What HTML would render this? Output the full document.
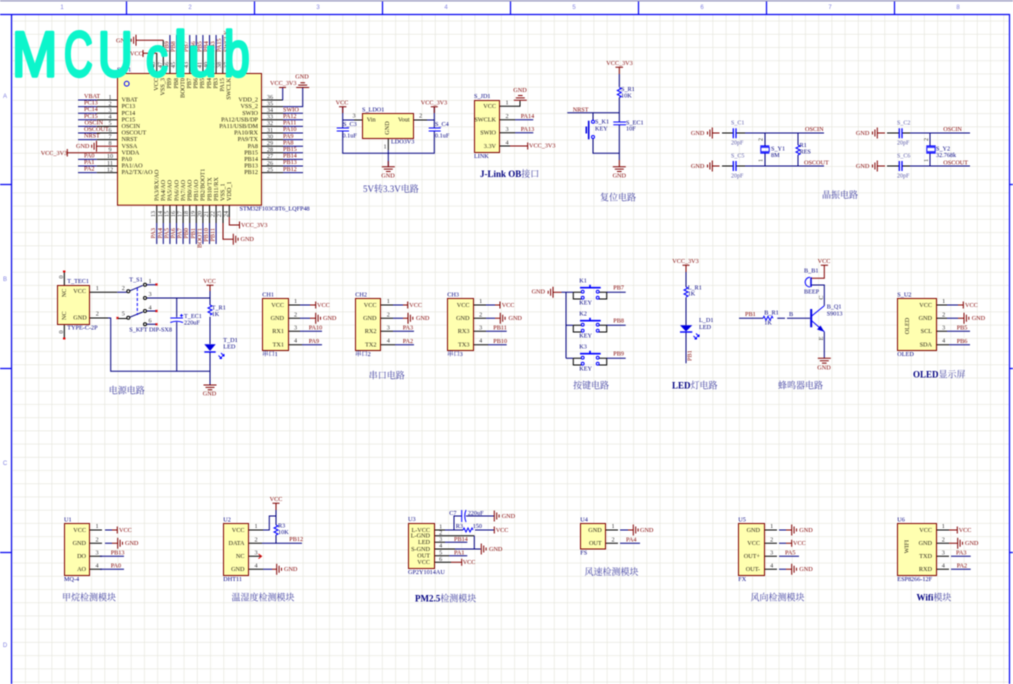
<!DOCTYPE html>
<html><head><meta charset="utf-8"><style>
html,body{margin:0;padding:0;background:#fff;width:1013px;height:684px;overflow:hidden}
svg{display:block;position:absolute;left:0;top:0}
text{font-family:"Liberation Serif","Noto Serif CJK SC",serif;font-size:6.2px}
.n{fill:#800000}.d{fill:#2a2418}.m{fill:#000080}.k{fill:#333}
.g{fill:#5b5ba8;font-size:6px}
.t{fill:#4040a0;font-size:9px}.t b,.t tspan{font-weight:bold;fill:#000080}
.c{text-anchor:middle}.e{text-anchor:end}
.f{fill:#8080e0;font-size:6px;text-anchor:middle;font-family:"Liberation Sans",sans-serif}
.p,.w,.r,.b,.fr{fill:none;stroke-width:1}
.p{stroke:#000}.w{stroke:#000080}.r{stroke:#800000}.b{stroke:#0000ff}.fr{stroke:#0000f0;stroke-width:1.2}
.box{fill:#ffffb0;stroke:#800000;stroke-width:1}
.mc text,.mc{font-family:"Liberation Sans",sans-serif;font-size:64px;fill:#0cf5cb;stroke:#0cf5cb;stroke-width:3.5px;stroke-linejoin:round}
</style></head><body>
<svg width="1013" height="684" viewBox="0 0 1013 684" style="filter:blur(.4px)">
<defs>
<pattern id="gr" x="11.9" y="20.7" width="13.22" height="13.22" patternUnits="userSpaceOnUse"><path d="M0 0V13.22M0 0H13.22" stroke="#e4e4da" stroke-width="1.2" fill="none"/></pattern>
<g id="gR" class="r"><path d="M0-5.5V5.5M2.4-3.5V3.5M4.8-1.5V1.5" class="r"/></g>
<g id="gL"><path d="M0-5.5V5.5M-2.4-3.5V3.5M-4.8-1.5V1.5" class="r"/></g>
<g id="gD"><path d="M-6.5 0H6.5M-4.5 2.4H4.5M-2.3 4.8H2.3" class="r"/></g>
<g id="gU"><path d="M-6.5 0H6.5M-4.5-2.4H4.5M-2.3-4.8H2.3" class="r"/></g>
<path id="rv" d="M0 0l2 1-4 2 4 2-4 2 4 2-2 1" class="b"/>
<path id="rh" d="M0 0l1-2 2 4 2-4 2 4 2-4 1 2" class="b"/>
<g id="key">
<path class="p" d="M573.3 292.3H581.7M573.3 292.3V299H581.7M598.7 292.3H606.7V299H598.7"/>
<circle cx="582.7" cy="291.7" r="1.4" class="b"/><circle cx="582.7" cy="297.7" r="1.4" class="b"/>
<circle cx="597.7" cy="291.7" r="1.4" class="b"/><circle cx="597.7" cy="297.7" r="1.4" class="b"/>
<path class="b" stroke-width="1.6" style="stroke-width:1.6" d="M580 287.7H600.7M590 287V284.7"/>
<path class="w" d="M606.7 292.3H625.7"/>
</g>
<path id="arw" d="M0 0l3 3M3 1v2h-2M-2.5 2.5l3 3M.5 3.5v2h-2" class="b"/>
</defs>
<rect x="12" y="15" width="997" height="669" fill="url(#gr)"/>
<!-- frame -->
<path d="M0 .8H1013" stroke="#9a9ac0" stroke-width="1.4"/>
<path class="fr" d="M11.5 14.5H1009.5V684M11.5 14.5V684M0 14.5H11.5M126.5 1.5V14.5M254.5 1.5V14.5M382.5 1.5V14.5M510.5 1.5V14.5M638.5 1.5V14.5M766.5 1.5V14.5M894.5 1.5V14.5M0 184.5H11.5M0 368.5H11.5M0 552.5H11.5M1009.5 184.5H1013M1009.5 368.5H1013M1009.5 552.5H1013"/>
<text class="f" x="62" y="9">1</text><text class="f" x="190" y="9">2</text><text class="f" x="318" y="9">3</text><text class="f" x="446" y="9">4</text><text class="f" x="574" y="9">5</text><text class="f" x="702" y="9">6</text><text class="f" x="830" y="9">7</text><text class="f" x="958" y="9">8</text>
<text class="f" x="5" y="98">A</text><text class="f" x="5" y="281">B</text><text class="f" x="5" y="465">C</text><text class="f" x="5" y="647">D</text>

<!-- MCU -->
<path class="p" d="M117 100H96.7M117 106.6H96.7M117 113.2H96.7M117 119.8H96.7M117 126.4H96.7M117 133H96.7M117 139.6H96.7M117 159.4H96.7M117 166H96.7M117 172.6H96.7M262 100H283M262 106.6H283M262 113.2H283M262 119.8H283M262 126.4H283M262 133H283M262 139.6H283M262 146.2H283M262 152.8H283M262 159.4H283M262 166H283M262 172.6H283"/>
<path class="w" d="M96.7 100H78M96.7 106.6H78M96.7 113.2H78M96.7 119.8H78M96.7 126.4H78M96.7 133H78M96.7 139.6H78M96.7 159.4H78M96.7 166H78M96.7 172.6H78M283 100H282.7V87.5M283 106.6H302.7V88M283 113.2H303M283 119.8H303M283 126.4H303M283 133H303M283 139.6H303M283 146.2H303M283 152.8H303M283 159.4H303M283 166H303M283 172.6H303"/>
<path class="r" d="M117 146.2H96.5M117 152.8H67.3M67.3 149V156.5M279 87.5H286"/>
<use href="#gL" x="96.5" y="146.2"/><use href="#gU" x="302.7" y="87.5"/>
<path class="p" d="M156.7 73V53M163.3 73V40.3M169.9 73V50M176.5 73V50M183.1 73V50M189.7 73V50M196.3 73V50M202.9 73V50M209.5 73V50M216.1 73V50M222.7 73V50M229.3 73V50"/>
<path class="w" d="M169.9 50V35M176.5 50V35M183.1 50V35M189.7 50V35M196.3 50V35M202.9 50V35M209.5 50V35M216.1 50V35M222.7 50V35M229.3 50V35"/>
<path class="r" d="M156.7 53.3H143M143 50V57M163.3 40.3H136"/>
<use href="#gL" x="136" y="40.3"/>
<path class="p" d="M156.7 205V223M163.3 205V223M169.9 205V223M176.5 205V223M183.1 205V223M189.7 205V223M196.3 205V223M202.9 205V223M209.5 205V223M216.1 205V223M223 205V223M229.3 205V217"/>
<path class="w" d="M156.7 223V244M163.3 223V244M169.9 223V244M176.5 223V244M183.1 223V244M189.7 223V244M196.3 223V244M202.9 223V244M209.5 223V244M216.1 223V244"/>
<path class="r" d="M223 223V239.3H233.3M229.3 217V225H239.5M239.5 221.5V228.5"/>
<use href="#gR" x="233.3" y="239.3"/>
<rect x="117.5" y="73.5" width="144" height="131.7" class="box"/>
<circle cx="126.7" cy="83.7" r="2.4" fill="none" stroke="#0000ff"/>
<text class="m" x="117" y="71.5">S_U1</text>
<text class="m" x="239.5" y="210.5">STM32F103C8T6_LQFP48</text>
<text class="d" x="121.5" y="101.6">VBAT</text><text class="d" x="121.5" y="108.2">PC13</text><text class="d" x="121.5" y="114.8">PC14</text><text class="d" x="121.5" y="121.4">PC15</text><text class="d" x="121.5" y="128">OSCIN</text><text class="d" x="121.5" y="134.6">OSCOUT</text><text class="d" x="121.5" y="141.2">NRST</text><text class="d" x="121.5" y="147.8">VSSA</text><text class="d" x="121.5" y="154.4">VDDA</text><text class="d" x="121.5" y="161">PA0</text><text class="d" x="121.5" y="167.6">PA1/AO</text><text class="d" x="121.5" y="174.2">PA2/TX/AO</text>
<text class="d e" x="258" y="101.6">VDD_2</text><text class="d e" x="258" y="108.2">VSS_2</text><text class="d e" x="258" y="114.8">SWIO</text><text class="d e" x="258" y="121.4">PA12/USB/DP</text><text class="d e" x="258" y="128">PA11/USB/DM</text><text class="d e" x="258" y="134.6">PA10/RX</text><text class="d e" x="258" y="141.2">PA9/TX</text><text class="d e" x="258" y="147.8">PA8</text><text class="d e" x="258" y="154.4">PB15</text><text class="d e" x="258" y="161">PB14</text><text class="d e" x="258" y="167.6">PB13</text><text class="d e" x="258" y="174.2">PB12</text>
<text class="k c" x="110" y="98.8">1</text><text class="k c" x="110" y="105.4">2</text><text class="k c" x="110" y="112">3</text><text class="k c" x="110" y="118.6">4</text><text class="k c" x="110" y="125.2">5</text><text class="k c" x="110" y="131.8">6</text><text class="k c" x="110" y="138.4">7</text><text class="k c" x="110" y="145">8</text><text class="k c" x="110" y="151.6">9</text><text class="k c" x="110" y="158.2">10</text><text class="k c" x="110" y="164.8">11</text><text class="k c" x="110" y="171.4">12</text>
<text class="k c" x="270" y="98.8">36</text><text class="k c" x="270" y="105.4">35</text><text class="k c" x="270" y="112">34</text><text class="k c" x="270" y="118.6">33</text><text class="k c" x="270" y="125.2">32</text><text class="k c" x="270" y="131.8">31</text><text class="k c" x="270" y="138.4">30</text><text class="k c" x="270" y="145">29</text><text class="k c" x="270" y="151.6">28</text><text class="k c" x="270" y="158.2">27</text><text class="k c" x="270" y="164.8">26</text><text class="k c" x="270" y="171.4">25</text>
<text class="n" x="84" y="98">VBAT</text><text class="n" x="84" y="104.6">PC13</text><text class="n" x="84" y="111.2">PC14</text><text class="n" x="84" y="117.8">PC15</text><text class="n" x="84.5" y="124.4">OSCIN</text><text class="n" x="84" y="131">OSCOUT</text><text class="n" x="84" y="137.6">NRST</text><text class="n" x="84" y="157.4">PA0</text><text class="n" x="84" y="164">PA1</text><text class="n" x="84" y="170.6">PA2</text>
<text class="n" x="283" y="111.5">SWIO</text><text class="n" x="283" y="118">PA12</text><text class="n" x="283" y="124.6">PA11</text><text class="n" x="283" y="131.2">PA10</text><text class="n" x="283" y="137.8">PA9</text><text class="n" x="283" y="144.4">PA8</text><text class="n" x="283" y="151">PB15</text><text class="n" x="283" y="157.6">PB14</text><text class="n" x="283" y="164.2">PB13</text><text class="n" x="283" y="170.8">PB12</text>
<text class="n" x="270" y="85">VCC_3V3</text><text class="n c" x="302" y="78.5">GND</text>
<text class="n" x="76" y="148" >GND</text><text class="n" x="40.7" y="155">VCC_3V3</text>
<text class="n" x="116" y="42.3">GND</text><text class="n" x="130" y="55.5">VCC</text>
<text class="n" x="241" y="227">VCC_3V3</text><text class="n" x="240.5" y="241">GND</text>
<text class="d" transform="translate(158,78) rotate(-90)" text-anchor="end">VCC</text><text class="d" transform="translate(164.6,78) rotate(-90)" text-anchor="end">VSS_3</text><text class="d" transform="translate(171.2,78) rotate(-90)" text-anchor="end">PB9</text><text class="d" transform="translate(177.8,78) rotate(-90)" text-anchor="end">PB8</text><text class="d" transform="translate(184.4,78) rotate(-90)" text-anchor="end">BOOT0</text><text class="d" transform="translate(191,78) rotate(-90)" text-anchor="end">PB7</text><text class="d" transform="translate(197.6,78) rotate(-90)" text-anchor="end">PB6</text><text class="d" transform="translate(204.2,78) rotate(-90)" text-anchor="end">PB5</text><text class="d" transform="translate(210.8,78) rotate(-90)" text-anchor="end">PB4</text><text class="d" transform="translate(217.4,78) rotate(-90)" text-anchor="end">PB3</text><text class="d" transform="translate(224,78) rotate(-90)" text-anchor="end">PA15</text><text class="d" transform="translate(230.6,78) rotate(-90)" text-anchor="end">SWCLK</text>
<text class="d" transform="translate(158.5,201) rotate(-90)">PA3/RX/AO</text><text class="d" transform="translate(165.1,201) rotate(-90)">PA4/AO</text><text class="d" transform="translate(171.7,201) rotate(-90)">PA5/AO</text><text class="d" transform="translate(178.3,201) rotate(-90)">PA6/AO</text><text class="d" transform="translate(184.9,201) rotate(-90)">PA7/AO</text><text class="d" transform="translate(191.5,201) rotate(-90)">PB0/AO</text><text class="d" transform="translate(198.1,201) rotate(-90)">PB1/AO</text><text class="d" transform="translate(204.7,201) rotate(-90)">PB2/BOOT1</text><text class="d" transform="translate(211.3,201) rotate(-90)">PB10/TX</text><text class="d" transform="translate(217.9,201) rotate(-90)">PB11/RX</text><text class="d" transform="translate(224.5,201) rotate(-90)">VSS_1</text><text class="d" transform="translate(231.1,201) rotate(-90)">VDD_1</text>
<text class="k c" transform="translate(155.2,65) rotate(-90)">48</text><text class="k c" transform="translate(161.8,65) rotate(-90)">47</text><text class="k c" transform="translate(168.4,65) rotate(-90)">46</text><text class="k c" transform="translate(175,65) rotate(-90)">45</text><text class="k c" transform="translate(181.6,65) rotate(-90)">44</text><text class="k c" transform="translate(188.2,65) rotate(-90)">43</text><text class="k c" transform="translate(194.8,65) rotate(-90)">42</text><text class="k c" transform="translate(201.4,65) rotate(-90)">41</text><text class="k c" transform="translate(208,65) rotate(-90)">40</text><text class="k c" transform="translate(214.6,65) rotate(-90)">39</text><text class="k c" transform="translate(221.2,65) rotate(-90)">38</text><text class="k c" transform="translate(227.8,65) rotate(-90)">37</text>
<text class="k c" transform="translate(155.2,214) rotate(-90)">13</text><text class="k c" transform="translate(161.8,214) rotate(-90)">14</text><text class="k c" transform="translate(168.4,214) rotate(-90)">15</text><text class="k c" transform="translate(175,214) rotate(-90)">16</text><text class="k c" transform="translate(181.6,214) rotate(-90)">17</text><text class="k c" transform="translate(188.2,214) rotate(-90)">18</text><text class="k c" transform="translate(194.8,214) rotate(-90)">19</text><text class="k c" transform="translate(201.4,214) rotate(-90)">20</text><text class="k c" transform="translate(208,214) rotate(-90)">21</text><text class="k c" transform="translate(214.6,214) rotate(-90)">22</text><text class="k c" transform="translate(221.2,214) rotate(-90)">23</text><text class="k c" transform="translate(227.8,214) rotate(-90)">24</text>
<text class="n" transform="translate(168.4,52) rotate(-90)">PB9</text><text class="n" transform="translate(175,52) rotate(-90)">PB8</text><text class="n" transform="translate(181.6,52) rotate(-90)">BOOT0</text><text class="n" transform="translate(188.2,52) rotate(-90)">PB7</text><text class="n" transform="translate(194.8,52) rotate(-90)">PB6</text><text class="n" transform="translate(201.4,52) rotate(-90)">PB5</text><text class="n" transform="translate(208,52) rotate(-90)">PB4</text><text class="n" transform="translate(214.6,52) rotate(-90)">PB3</text><text class="n" transform="translate(221.2,52) rotate(-90)">PA15</text><text class="n" transform="translate(227.8,52) rotate(-90)">SWCLK</text>
<text class="n" transform="translate(155.2,228) rotate(-90)" text-anchor="end">PA3</text><text class="n" transform="translate(161.8,228) rotate(-90)" text-anchor="end">PA4</text><text class="n" transform="translate(168.4,228) rotate(-90)" text-anchor="end">PA5</text><text class="n" transform="translate(175,228) rotate(-90)" text-anchor="end">PA6</text><text class="n" transform="translate(181.6,228) rotate(-90)" text-anchor="end">PA7</text><text class="n" transform="translate(188.2,228) rotate(-90)" text-anchor="end">PB0</text><text class="n" transform="translate(194.8,228) rotate(-90)" text-anchor="end">PB1</text><text class="n" transform="translate(201.4,228) rotate(-90)" text-anchor="end">BOOT1</text><text class="n" transform="translate(208,228) rotate(-90)" text-anchor="end">PB10</text><text class="n" transform="translate(214.6,228) rotate(-90)" text-anchor="end">PB11</text>

<!-- LDO -->
<path class="p" d="M362.3 120H354M413.7 120H427M388.3 138V150"/>
<path class="w" d="M354 120H342.7M342.7 106.7V128M342.7 131V153.3H434.3V131M434.3 128V106.7M427 120H434.3M388.3 150V166.7"/>
<path class="r" d="M339 106.7H346.4M430.8 106.7H437.8M342.7 106.7V113M434.3 106.7V113M388.3 161V166.7"/>
<path class="b" d="M336.7 128H349M336.7 131H349M428.7 128H440.7M428.7 131H440.7"/>
<rect x="362.5" y="113.5" width="51" height="25" class="box"/>
<use href="#gD" x="388.3" y="166.7"/>
<text class="m" x="362" y="111.3">S_LDO1</text><text class="m" x="391" y="143.7">LDO3V3</text>
<text class="d" x="366.7" y="121.3">Vin</text><text class="d" x="398" y="121.3">Vout</text><text class="d c" transform="translate(389,128) rotate(-90)">GND</text>
<text class="k c" x="354" y="117.7">3</text><text class="k c" x="420.7" y="117.7">2</text><text class="k c" x="385" y="148.7">1</text>
<text class="n c" x="342" y="104.7">VCC</text><text class="n c" x="434" y="104.7">VCC_3V3</text>
<text class="m" x="343" y="126">S_C3</text><text class="m" x="342.5" y="137.7">0.1uF</text><text class="m" x="435" y="126">S_C4</text><text class="m" x="435" y="137.7">0.1uF</text>
<text class="n c" x="388" y="177.5">GND</text>
<text class="t" x="363" y="192">5V转3.3V电路</text>

<!-- J-Link -->
<path class="p" d="M499 106.3H520V100.7M499 119.7H515M499 132.7H515M499 146H510"/>
<path class="w" d="M515 119.7H533.3M515 132.7H533.3"/>
<path class="r" d="M510 146H527.7M527.7 142.5V149.5"/>
<use href="#gU" x="520.3" y="100.3"/>
<rect x="474.5" y="100.5" width="25" height="52" class="box"/>
<text class="m" x="474" y="98">S_JD1</text><text class="m" x="474" y="158">LINK</text>
<text class="d e" x="496" y="108">VCC</text><text class="d e" x="496" y="121.5">SWCLK</text><text class="d e" x="496" y="134.5">SWIO</text><text class="d e" x="496" y="147.8">3.3V</text>
<text class="k c" x="507" y="104.7">1</text><text class="k c" x="507" y="118">2</text><text class="k c" x="507" y="131">3</text><text class="k c" x="507" y="144.3">4</text>
<text class="n" x="520.7" y="118">PA14</text><text class="n" x="520.7" y="131">PA13</text><text class="n" x="529" y="147.7">VCC_3V3</text><text class="n c" x="520" y="91.8">GND</text>
<text class="t" x="480" y="177"><tspan>J-Link OB</tspan>接口</text>

<!-- Reset -->
<path class="r" d="M615.5 67.3H623M619.3 67.3V74M619.3 160V166.7"/>
<path class="w" d="M619.3 74V87M619.3 97.5V122M619.3 124.7V160M567.3 112.7H619.3M593 112.7V120M593 138.5V153.3H619.3"/>
<use href="#rv" x="619.3" y="87.5"/>
<path class="b" d="M613.3 122H626M613.3 124.7H626M593 120.3V120.3"/>
<circle cx="593" cy="121.7" r="1.5" class="b"/><circle cx="593" cy="137" r="1.5" class="b"/>
<path d="M588.7 120.7V139.3" stroke="#0000e0" stroke-width="1.6"/><path d="M586.3 126.5V133.5" stroke="#0000e0" stroke-width="1.6"/>
<use href="#gD" x="619.3" y="166.7"/>
<text class="n c" x="619.5" y="64.8">VCC_3V3</text><text class="n" x="572.7" y="111.3">NRST</text>
<text class="m" x="621" y="91">S_R1</text><text class="m" x="621" y="97.7">10K</text>
<text class="m" x="626" y="124.3">S_EC1</text><text class="m" x="626" y="130.3">10F</text>
<text class="m" x="595" y="123.7">S_K1</text><text class="m" x="595" y="130.3">KEY</text>
<text class="n c" x="619.3" y="177.5">GND</text>
<text class="t" x="600" y="200.5">复位电路</text>

<!-- Crystal -->
<path class="r" d="M712.3 133H719.5M712.3 166H719.5M877.3 133H885M877.3 166H885"/>
<use href="#gL" x="712.3" y="133"/><use href="#gL" x="712.3" y="166"/><use href="#gL" x="877.3" y="133"/><use href="#gL" x="877.3" y="166"/>
<path class="p" d="M722 133H733.3M722 166H733.3M736 133H745M736 166H745M887 133H899.3M887 166H899.3M902 133H910M902 166H910"/>
<path class="w" d="M745 133H824M745 166H824M765 133V146M765 153V166M798 133V145M798 155V166M910 133H970M910 166H970M930 133V146M930 153V166"/>
<path style="stroke-width:1.3" class="b" d="M733.3 128.3V138.3M736 128.3V138.3M733.3 161V171M736 161V171M899.3 128.3V138.3M902 128.3V138.3M899.3 161V171M902 161V171M760.3 146H769.3M760.3 153H769.3M926.3 146H935.7M926.3 153H935.7"/>
<rect x="760.8" y="147.3" width="8.4" height="4.4" fill="none" class="b"/><rect x="926.8" y="147.3" width="8.4" height="4.4" fill="none" class="b"/>
<use href="#rv" x="798" y="145"/>
<text class="n e" x="704.3" y="134.8">GND</text><text class="n e" x="704.3" y="167.8">GND</text><text class="n e" x="869.3" y="134.8">GND</text><text class="n e" x="869.3" y="167.8">GND</text>
<text class="g" x="731" y="124.3">S_C1</text><text class="g" x="731" y="144.3">20pF</text><text class="g" x="731" y="157.7">S_C5</text><text class="g" x="731" y="177.3">20pF</text>
<text class="g" x="897" y="124.3">S_C2</text><text class="g" x="897" y="144.3">20pF</text><text class="g" x="897" y="157.7">S_C6</text><text class="g" x="897" y="177.3">20pF</text>
<text class="m" x="771" y="150.7">S_Y1</text><text class="m" x="771" y="157">8M</text><text class="m" x="799.5" y="147">R1</text><text class="m" x="799.5" y="153.7">RES</text>
<text class="m" x="936" y="150.7">S_Y2</text><text class="m" x="936" y="157">32.768k</text>
<text class="k" transform="translate(762.5,141) rotate(-90)">2</text><text class="k" transform="translate(762.5,162) rotate(-90)">1</text><text class="k" transform="translate(928,141) rotate(-90)">2</text><text class="k" transform="translate(928,162) rotate(-90)">1</text>
<text class="n" x="805" y="131">OSCIN</text><text class="n" x="804" y="164.3">OSCOUT</text><text class="n" x="943.3" y="131">OSCIN</text><text class="n" x="943.3" y="164.3">OSCOUT</text>
<text class="t" x="822" y="198">晶振电路</text>

<!-- Power -->
<path class="p" d="M89.3 292.3H117.3M89.3 318H108M64.3 271.7V285M64.3 324.7V338.3"/>
<rect x="63" y="270.5" width="2.4" height="2" fill="#e00000"/><rect x="63" y="337.5" width="2.4" height="2" fill="#e00000"/>
<path class="w" d="M117.3 292.3H126.7M108 318H110.7V371.3H210M147 298H210M176.7 298V317.3M176.7 322V371.3M210 285.3V305M210 316.7V344M210 352.5V385M129.8 290.8L142.8 285.4M129.8 317.2L142.8 312M146.5 284.7H156M146.5 311H156M146.5 324.3H156"/>
<path class="b" stroke-dasharray="3 2" d="M137.3 288V315"/>
<circle cx="128.3" cy="291.3" r="1.5" class="p"/><circle cx="145" cy="284.7" r="1.5" class="p"/><circle cx="145" cy="298" r="1.5" class="p"/><circle cx="145" cy="311" r="1.5" class="p"/><circle cx="128.3" cy="317.7" r="1.5" class="p"/><circle cx="145" cy="324.3" r="1.5" class="p"/>
<path d="M155.5 283.5l2 2M155.5 285.5l2-2M155.5 310l2 2M155.5 312l2-2M155.5 323.3l2 2M155.5 325.3l2-2M116.5 317l2 2M116.5 319l2-2" stroke="#e00000" fill="none"/>
<path class="p" d="M118 318.5H127"/>
<path class="b" d="M170.3 318H183M170.3 322.5Q176.7 320 183 322.5M180 315.5h3M181.5 314v3"/>
<path class="r" d="M206.5 285.3H213.5M210 285.3V291"/>
<use href="#rv" x="210" y="305"/>
<path d="M204.3 344.2H215.7L210 351Z" fill="#0000e0"/><path class="b" d="M204.3 352H215.7" style="stroke-width:1.4"/>
<use href="#arw" x="221" y="353"/>
<use href="#gD" x="210" y="385"/>
<rect x="57.5" y="285.5" width="32" height="39" class="box"/>
<text class="m" x="67.3" y="283">T_TEC1</text><text class="m" x="67.3" y="329.3">TYPE-C-2P</text>
<text class="d" x="73.3" y="293.2">VCC</text><text class="d" x="73.3" y="319.6">GND</text>
<text class="d c" transform="translate(66,293) rotate(-90)">NC</text><text class="d c" transform="translate(66,315.7) rotate(-90)">NC</text>
<text class="k c" transform="translate(63,277) rotate(-90)">0</text><text class="k c" transform="translate(63,332) rotate(-90)">0</text>
<text class="k c" x="97.3" y="290">1</text><text class="k c" x="97.3" y="315.7">2</text>
<text class="k c" x="123.3" y="290">2</text><text class="k c" x="150" y="283">1</text><text class="k c" x="150" y="296">3</text><text class="k c" x="150" y="309.3">4</text><text class="k c" x="123.3" y="315.7">5</text><text class="k c" x="150" y="322.3">6</text>
<text class="m" x="129.3" y="281.3">T_S1</text><text class="m" x="129.3" y="331.3">S_KFT DIP-SX8</text>
<text class="m" x="184" y="318">T_EC1</text><text class="m" x="184" y="324.7">220uF</text>
<text class="n c" x="209.5" y="283">VCC</text>
<text class="m" x="211.7" y="309.3">T_R1</text><text class="m" x="211.7" y="316">1K</text>
<text class="m" x="223.3" y="342">T_D1</text><text class="m" x="223.3" y="348.7">LED</text>
<text class="n c" x="209.5" y="395.7">GND</text>
<text class="t" x="108.7" y="393.7">电源电路</text>

<!-- CH1-3 -->
<path class="p" d="M288 305H300M288 318.3H300M288 331.3H300M288 344.7H302M380.7 305H393M380.7 318.3H393M380.7 331.3H393M380.7 344.7H395M473.3 305H486M473.3 318.3H486M473.3 331.3H486M473.3 344.7H488"/>
<path class="w" d="M300 305H310M300 318.3H310M300 331.3H322M302 344.7H322M393 305H403M393 318.3H403M393 331.3H414M395 344.7H414M486 305H495M486 318.3H495M486 331.3H506.7M488 344.7H506.7"/>
<path class="r" d="M310 305H315.7M315.7 301.5V308.5M310 318.3H315.7M403 305H407.7M407.7 301.5V308.5M403 318.3H408M495 305H500M500 301.5V308.5M495 318.3H500.3"/>
<use href="#gR" x="315.7" y="318.3"/><use href="#gR" x="408" y="318.3"/><use href="#gR" x="500.3" y="318.3"/>
<rect x="262.5" y="298.5" width="26" height="52" class="box"/><rect x="355.5" y="298.5" width="25" height="52" class="box"/><rect x="447.5" y="298.5" width="26" height="52" class="box"/>
<text class="m" x="262.3" y="296.3">CH1</text><text class="m" x="262.3" y="356">串口1</text><text class="m" x="355.3" y="296.3">CH2</text><text class="m" x="355.3" y="356">串口2</text><text class="m" x="447.3" y="296.3">CH3</text><text class="m" x="447.3" y="356">串口3</text>
<text class="d e" x="284" y="306.8">VCC</text><text class="d e" x="284" y="320">GND</text><text class="d e" x="284" y="333">RX1</text><text class="d e" x="284" y="346.5">TX1</text>
<text class="d e" x="376.5" y="306.8">VCC</text><text class="d e" x="376.5" y="320">GND</text><text class="d e" x="376.5" y="333">RX2</text><text class="d e" x="376.5" y="346.5">TX2</text>
<text class="d e" x="469.5" y="306.8">VCC</text><text class="d e" x="469.5" y="320">GND</text><text class="d e" x="469.5" y="333">RX3</text><text class="d e" x="469.5" y="346.5">TX3</text>
<text class="k c" x="295.5" y="303">1</text><text class="k c" x="295.5" y="316.3">2</text><text class="k c" x="295.5" y="329.3">3</text><text class="k c" x="295.5" y="342.7">4</text>
<text class="k c" x="388.3" y="303">1</text><text class="k c" x="388.3" y="316.3">2</text><text class="k c" x="388.3" y="329.3">3</text><text class="k c" x="388.3" y="342.7">4</text>
<text class="k c" x="480.7" y="303">1</text><text class="k c" x="480.7" y="316.3">2</text><text class="k c" x="480.7" y="329.3">3</text><text class="k c" x="480.7" y="342.7">4</text>
<text class="n" x="317" y="306.8">VCC</text><text class="n" x="323" y="320">GND</text><text class="n" x="308.7" y="329.7">PA10</text><text class="n" x="308.7" y="343">PA9</text>
<text class="n" x="409.3" y="306.8">VCC</text><text class="n" x="416" y="320">GND</text><text class="n" x="402.7" y="329.7">PA3</text><text class="n" x="402.7" y="343">PA2</text>
<text class="n" x="501.7" y="306.8">VCC</text><text class="n" x="508.5" y="320">GND</text><text class="n" x="493.3" y="329.7">PB11</text><text class="n" x="493.3" y="343">PB10</text>
<text class="t" x="368.7" y="378.7">串口电路</text>

<!-- Keys -->
<path class="r" d="M553 292.3H561.5"/>
<use href="#gL" x="553" y="292.3"/>
<path class="w" d="M561.5 292.3H573.3M566 292.3V358.3M566 325.3H573.3M566 358.3H573.3"/>
<use href="#key"/><use href="#key" y="33"/><use href="#key" y="66"/>
<text class="n e" x="545" y="293.5">GND</text>
<text class="m" x="579.3" y="282.7">K1</text><text class="m" x="579.3" y="304.7">KEY</text><text class="m" x="579.3" y="315.7">K2</text><text class="m" x="579.3" y="337.7">KEY</text><text class="m" x="579.3" y="348.7">K3</text><text class="m" x="579.3" y="370.7">KEY</text>
<text class="n" x="613.3" y="289.7">PB7</text><text class="n" x="613.3" y="322.7">PB8</text><text class="n" x="613.3" y="355.7">PB9</text>
<text class="t" x="573" y="388.7">按键电路</text>

<!-- LED -->
<path class="r" d="M682.5 265.3H689.5M686 265.3V272M686 360V363"/>
<path class="w" d="M686 272V287M686 297.5V325.3M686 332V363.3"/>
<use href="#rv" x="686" y="287"/>
<path d="M680 325.3H692.3L686 331.5Z" fill="#0000e0"/><path class="b" d="M680 332H692.3" style="stroke-width:1.4"/>
<use href="#arw" x="696" y="333.5"/>
<text class="n c" x="685.5" y="263">VCC_3V3</text>
<text class="m" x="687.7" y="289.3">L_R1</text><text class="m" x="687.7" y="295.7">1K</text><text class="m" x="699" y="322">L_D1</text><text class="m" x="699" y="329">LED</text>
<text class="n" transform="translate(691.5,361) rotate(-90)">PB1</text>
<text class="t" x="672" y="388.7"><tspan>LED</tspan>灯电路</text>

<!-- Buzzer -->
<path class="w" d="M739 318.3H763.3M787 318.3H810M777.3 318.3H785"/>
<use href="#rh" x="764" y="318.3" transform="translate(-1,0)"/>
<path d="M811.2 309V327.3" stroke="#0000e0" stroke-width="2"/>
<path class="b" d="M811.7 316L824.3 305.7M811.7 320.7L824.3 331.7"/>
<path d="M824.3 331.7L817 329.5L820.5 325.5Z" fill="#0000e0"/>
<path class="w" d="M824.3 305.7V285H811.5M824.3 331.7V358.3"/>
<path class="r" d="M820.8 265.3H828M824.3 265.3V278.3H811.5"/>
<path d="M811 277.3V287" stroke="#0000e0" stroke-width="1.5"/>
<path class="b" d="M810 277.3A4.8 4.8 0 0 0 810 287"/>
<use href="#gD" x="824.3" y="358.3"/>
<text class="n" x="745" y="316">PB1</text><text class="m" x="764.3" y="314.3">B_R1</text><text class="m" x="764.3" y="324.7">1K</text><text class="m" x="789" y="316">B</text>
<text class="m" x="826.7" y="308.7">B_Q1</text><text class="m" x="826.7" y="315.3">S9013</text><text class="m" x="804" y="272.7">B_B1</text><text class="m" x="804" y="293.7">BEEP</text>
<text class="n c" x="824" y="263">VCC</text><text class="n c" x="824" y="369.3">GND</text>
<text class="k c" transform="translate(823,297.5) rotate(-90)">C</text><text class="k c" transform="translate(823,338.5) rotate(-90)">E</text>
<text class="t" x="778" y="388.7">蜂鸣器电路</text>

<!-- OLED -->
<path class="p" d="M936.7 305H947M936.7 318.3H947M936.7 331.3H947M936.7 344.7H949"/>
<path class="w" d="M947 305H958M947 318.3H958M947 331.3H970M949 344.7H970"/>
<path class="r" d="M958 305H963.3M963.3 301.5V308.5M958 318.3H964"/>
<use href="#gR" x="964" y="318.3"/>
<rect x="897.5" y="298.5" width="39" height="52" class="box"/>
<text class="m" x="897.3" y="296.3">S_U2</text><text class="m" x="897.3" y="356">OLED</text>
<text class="d c" transform="translate(909,326) rotate(-90)">OLED</text>
<text class="d e" x="932" y="306.8">VCC</text><text class="d e" x="932" y="320">GND</text><text class="d e" x="932" y="333">SCL</text><text class="d e" x="932" y="346.5">SDA</text>
<text class="k c" x="943.7" y="303">1</text><text class="k c" x="943.7" y="316.3">2</text><text class="k c" x="943.7" y="329.3">3</text><text class="k c" x="943.7" y="342.7">4</text>
<text class="n" x="965" y="306.8">VCC</text><text class="n" x="971.7" y="320">GND</text><text class="n" x="956.7" y="329.7">PB5</text><text class="n" x="956.7" y="343">PB6</text>
<text class="t" x="913" y="377.5"><tspan>OLED</tspan>显示屏</text>

<!-- U1 -->
<path class="p" d="M89.3 530H102M89.3 543.3H102M89.3 556.3H102M89.3 569.3H102"/>
<path class="w" d="M105 530H112M105 543.3H112M100 556.3H124M100 569.3H124"/>
<path class="r" d="M112 530H117.3M117.3 526.5V533.5M112 543.3H117.7"/>
<use href="#gR" x="117.7" y="543.3"/>
<rect x="64.5" y="523.5" width="25" height="52" class="box"/>
<text class="m" x="64" y="521.3">U1</text><text class="m" x="64" y="581">MQ-4</text>
<text class="d e" x="86" y="531.8">VCC</text><text class="d e" x="86" y="545">GND</text><text class="d e" x="86" y="558">DO</text><text class="d e" x="86" y="571">AO</text>
<text class="k c" x="97" y="528">1</text><text class="k c" x="97" y="541.3">2</text><text class="k c" x="97" y="554.3">3</text><text class="k c" x="97" y="567.3">4</text>
<text class="n" x="119" y="531.8">VCC</text><text class="n" x="125" y="545">GND</text><text class="n" x="110.7" y="554.7">PB13</text><text class="n" x="110.7" y="567.7">PA0</text>
<text class="t" x="62" y="600.5">甲烷检测模块</text>

<!-- U2 -->
<path class="p" d="M248.7 530H263M248.7 543.3H262M248.7 556.3H261.7M248.7 569.3H263"/>
<path class="w" d="M263 530H269.3V516H276M276 510V525M276 535V543.3M262 543.3H302M263 569.3H272"/>
<path class="r" d="M272.5 503.3H279.5M276 503.3V510M272 569.3H276.7"/>
<path d="M258.5 554l3 2.3-3 2.3" stroke="#e00000" fill="none"/>
<use href="#rv" x="276" y="525"/>
<use href="#gR" x="276.7" y="569.3"/>
<rect x="223.5" y="523.5" width="25" height="52" class="box"/>
<text class="m" x="223.3" y="521.3">U2</text><text class="m" x="223.3" y="581">DHT11</text>
<text class="d e" x="244.5" y="531.8">VCC</text><text class="d e" x="244.5" y="545">DATA</text><text class="d e" x="244.5" y="558">NC</text><text class="d e" x="244.5" y="571">GND</text>
<text class="k c" x="256" y="528">1</text><text class="k c" x="256" y="541.3">2</text><text class="k c" x="256" y="554.3">3</text><text class="k c" x="256" y="567.3">4</text>
<text class="n c" x="276" y="501">VCC</text><text class="n" x="289.3" y="541">PB12</text><text class="n" x="284" y="571">GND</text>
<text class="m" x="278" y="527.5">R3</text><text class="m" x="278" y="534">10K</text>
<text class="t" x="231.5" y="600.5">温湿度检测模块</text>

<!-- U3 -->
<path class="p" d="M434 530H445M434 535.7H474.3M434 542.3H445M434 549H455M434 555.7H449M434 562.3H451"/>
<path class="w" d="M445 530H463M454 530V516H461.5M466 516H494.3M474.3 535.7V549M455 549H480.7M475 530H494.3M445 542.3H467.3M449 555.7H467.3"/>
<use href="#rh" x="463" y="530"/>
<path class="b" d="M461.7 510V522M466 510Q463.5 516 466 522"/>
<path class="r" d="M451 562.3H461.7M461.7 558.8V565.8M494.3 526.5V533.5"/>
<use href="#gR" x="494.3" y="516"/><use href="#gR" x="481.3" y="549"/>
<rect x="408.5" y="523.5" width="26" height="45" class="box"/>
<text class="m" x="408" y="521">U3</text><text class="m" x="408" y="574">GP2Y1014AU</text>
<text class="d e" x="430" y="531.8">L-VCC</text><text class="d e" x="430" y="537.7">L-GND</text><text class="d e" x="430" y="544.2">LED</text><text class="d e" x="430" y="550.8">S-GND</text><text class="d e" x="430" y="557.5">OUT</text><text class="d e" x="430" y="564.2">VCC</text>
<text class="k c" x="440.7" y="528.5">1</text><text class="k c" x="440.7" y="534.7">2</text><text class="k c" x="440.7" y="541">3</text><text class="k c" x="440.7" y="547.7">4</text><text class="k c" x="440.7" y="554.3">5</text><text class="k c" x="440.7" y="561">6</text>
<text class="m" x="449.3" y="515">C7</text><text class="m" x="467.7" y="515">220uF</text><text class="m" x="455.7" y="528">R3</text><text class="m" x="472.7" y="528">150</text>
<text class="n" x="495.7" y="531.8">VCC</text><text class="n" x="501.7" y="518">GND</text><text class="n" x="489" y="551">GND</text>
<text class="n" x="454" y="541">PB14</text><text class="n" x="454" y="554.3">PA1</text><text class="n" x="462.7" y="564.2">VCC</text>
<text class="t" x="415" y="601.5"><tspan>PM2.5</tspan>检测模块</text>

<!-- U4 -->
<path class="p" d="M605.7 530H618M605.7 543.3H618"/>
<path class="w" d="M620 530H628M620 543.3H640"/><path class="r" d="M628 530H633.3"/>
<use href="#gR" x="633.3" y="530"/>
<rect x="580.5" y="523.5" width="25" height="25.5" class="box"/>
<text class="m" x="580.3" y="521.3">U4</text><text class="m" x="580.3" y="554.3">FS</text>
<text class="d e" x="601.7" y="531.8">GND</text><text class="d e" x="601.7" y="545">OUT</text>
<text class="k c" x="613" y="528">1</text><text class="k c" x="613" y="541.3">2</text>
<text class="n" x="640" y="531.8">GND</text><text class="n" x="626" y="541.3">PA4</text>
<text class="t" x="584.5" y="575">风速检测模块</text>

<!-- U5 -->
<path class="p" d="M764.7 530H777M764.7 543.3H777M764.7 556.3H777M764.7 569.3H777"/>
<path class="w" d="M779 530H786M779 543.3H786M779 556.3H799M779 569.3H786"/>
<path class="r" d="M786 530H791.7M786 543.3H791.7M791.7 539.8V546.8M786 569.3H791.7"/>
<use href="#gR" x="791.7" y="530"/><use href="#gR" x="791.7" y="569.3"/>
<rect x="738.5" y="523.5" width="26" height="52" class="box"/>
<text class="m" x="738.3" y="521.3">U5</text><text class="m" x="738.3" y="581">FX</text>
<text class="d e" x="760" y="531.8">GND</text><text class="d e" x="760" y="545">VCC</text><text class="d e" x="760" y="558">OUT+</text><text class="d e" x="760" y="571">OUT-</text>
<text class="k c" x="771.7" y="528">1</text><text class="k c" x="771.7" y="541.3">2</text><text class="k c" x="771.7" y="554.3">3</text><text class="k c" x="771.7" y="567.3">4</text>
<text class="n" x="799.3" y="531.8">GND</text><text class="n" x="793" y="545">VCC</text><text class="n" x="785" y="554.3">PA5</text><text class="n" x="799.3" y="571">GND</text>
<text class="t" x="750.5" y="600.5">风向检测模块</text>

<!-- U6 -->
<path class="p" d="M936.7 530H949M936.7 543.3H949M936.7 556.3H949M936.7 569.3H949"/>
<path class="w" d="M951 530H952M951 556.3H970.7M951 569.3H970.7"/>
<path class="r" d="M949 530H957.3M957.3 526.5V533.5M949 543.3H957.7"/>
<use href="#gR" x="957.7" y="543.3"/>
<rect x="897.5" y="523.5" width="39" height="52" class="box"/>
<text class="m" x="897.3" y="521.3">U6</text><text class="m" x="897.3" y="581">ESP8266-12F</text>
<text class="d c" transform="translate(908.5,546.7) rotate(-90)">WIFI</text>
<text class="d e" x="932" y="531.8">VCC</text><text class="d e" x="932" y="545">GND</text><text class="d e" x="932" y="558">TXD</text><text class="d e" x="932" y="571">RXD</text>
<text class="k c" x="943.3" y="528">1</text><text class="k c" x="943.3" y="541.3">2</text><text class="k c" x="943.3" y="554.3">3</text><text class="k c" x="943.3" y="567.3">4</text>
<text class="n" x="958.7" y="531.8">VCC</text><text class="n" x="965" y="545">GND</text><text class="n" x="956" y="554.3">PA3</text><text class="n" x="956.7" y="567.3">PA2</text>
<text class="t" x="916.5" y="600.5"><tspan>Wifi</tspan>模块</text>

<!-- watermark -->
<g class="mc">
<text transform="translate(12,76) scale(.85,.98)">M</text>
<text transform="translate(64,76) scale(.62,.98)">C</text>
<text transform="translate(98,76) scale(.75,.98)">U</text>
<text transform="translate(146,76) scale(.68,.85)">c</text>
<text transform="translate(174,76) scale(.9,.98)">l</text>
<text transform="translate(188,76) scale(.8,.85)">u</text>
<text transform="translate(224,76) scale(.72,.98)">b</text>
</g>
</svg>
</body></html>
